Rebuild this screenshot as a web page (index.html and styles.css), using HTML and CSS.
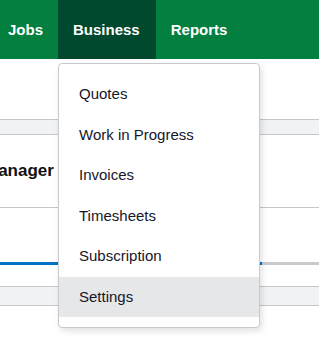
FILE: index.html
```html
<!DOCTYPE html>
<html>

<head>
    <title>Business Menu</title>
    <link rel="stylesheet" href="styles.css">
</head>

<body>

    <nav class="topnav">
        <div class="nav-item">Jobs</div>
        <div class="nav-item active">
            Business
            <ul class="dropdown">
                <li>Quotes</li>
                <li>Work in Progress</li>
                <li>Invoices</li>
                <li>Timesheets</li>
                <li>Subscription</li>
                <li class="hover">Settings</li>
            </ul>
        </div>
        <div class="nav-item">Reports</div>
    </nav>

    <div class="page">
        <div class="band"></div>
        <div class="section">
            <h2 class="title">Manager</h2>
        </div>
        <div class="progress-area">
            <div class="progress">
                <div class="progress-fill" style="width: 262px"></div>
            </div>
        </div>
        <div class="band band-low"></div>
    </div>

</body>

</html>
```

FILE: styles.css
```css
body {
    font-family: "Liberation Sans", Arial, sans-serif;
    margin: 0;
    padding: 0;
    background: #fff;
    min-height: 350px;
}

.topnav {
    display: flex;
    height: 59px;
    background: #03803f;
    margin-left: -7px;
}

.nav-item {
    position: relative;
    display: flex;
    align-items: center;
    padding: 0 15px;
    color: #fff;
    font-weight: bold;
    font-size: 15px;
}

.nav-item.active {
    background: #00492e;
    padding-right: 16px;
}

.dropdown {
    position: absolute;
    top: 63px;
    left: 0;
    width: 202px;
    box-sizing: border-box;
    margin: 0;
    padding: 10px 0;
    list-style: none;
    background: #fff;
    border: 1px solid #c9cacd;
    border-radius: 4px;
    box-shadow: 2px 3px 6px rgba(0, 0, 0, 0.12);
    z-index: 10;
}

.dropdown li {
    padding: 10px 20px;
    line-height: 20.5px;
    font-size: 15px;
    font-weight: normal;
    color: #16162a;
}

.dropdown li.hover {
    background: #e6e7e9;
}

.page {
    padding-top: 60px;
}

.band {
    height: 14px;
    background: #f1f2f4;
    border-top: 1px solid #c6c7ca;
    border-bottom: 1px solid #c6c7ca;
}

.band-low {
    height: 18px;
}

.section {
    height: 72px;
    border-bottom: 1px solid #c6c7ca;
    display: flex;
    align-items: center;
}

.title {
    margin: 0 0 0 -16px;
    font-size: 17px;
    font-weight: bold;
    color: #111;
}

.progress-area {
    padding-top: 54px;
    height: 24px;
}

.progress {
    height: 3px;
    background: #c8cacd;
}

.progress-fill {
    height: 3px;
    background: #0072c6;
}
```
